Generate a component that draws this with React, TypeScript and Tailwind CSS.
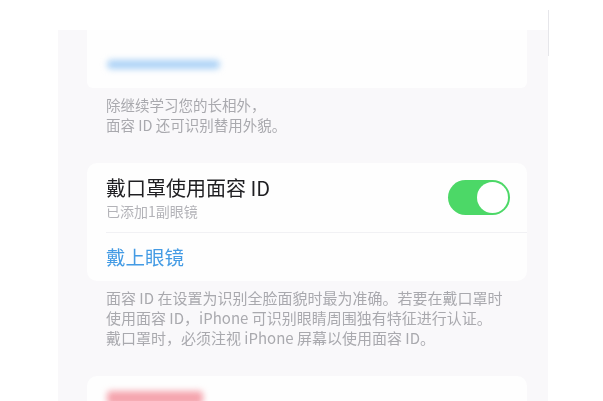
const font = { fontFamily: '"Noto Sans CJK SC", "Noto Sans", sans-serif' }

export default function App() {
  return (
    <div
      className="w-[603px] h-[401px] overflow-hidden bg-white flex"
      style={font}
    >
      {/* white margin left of the phone */}
      <div className="w-[58px] shrink-0" />

      {/* Phone screen */}
      <div className="w-[490px] shrink-0 mt-[30px] bg-[#f9f8fa] pl-[29px] pr-[21px] blur-[0.4px]">
        {/* Top card, cut off by the photo */}
        <div className="h-[58px] bg-[#fefefe] rounded-b-[6px] flex items-center pl-[20px]">
          <div className="w-[113px] h-[9px] mt-[10px] rounded-full bg-[#acd2f6] blur-[3px]" />
        </div>

        <div className="pl-[19px] pt-[7px] text-[14.5px] leading-[20px] text-[#a9a9ae]">
          <p>除继续学习您的长相外，</p>
          <p>面容 ID 还可识别替用外貌。</p>
        </div>

        {/* Mask card */}
        <div className="mt-[28px] bg-[#fefefe] rounded-[10px]">
          <div className="h-[69px] flex items-center pl-[19px] pr-[17px]">
            <div className="flex-1 pt-[2px]">
              <p className="text-[20px] leading-[24px] text-[#1f1f22]">戴口罩使用面容 ID</p>
              <p className="text-[14px] leading-[20px] text-[#b3b3b8] mt-[1px]">已添加1副眼镜</p>
            </div>
            <div className="w-[62px] h-[35px] rounded-full bg-[#4cd867] p-[2px] flex justify-end">
              <div className="w-[31px] h-[31px] rounded-full bg-white" />
            </div>
          </div>
          <div className="ml-[19px] h-px bg-[#f1f1f4]" />
          <div className="h-[48px] flex items-center pl-[19px]">
            <p className="text-[19.5px] text-[#449be4]">戴上眼镜</p>
          </div>
        </div>

        <div className="pl-[19px] pt-[7px] text-[15px] leading-[20px] text-[#a9a9ae]">
          <p>面容 ID 在设置为识别全脸面貌时最为准确。若要在戴口罩时</p>
          <p>使用面容 ID，iPhone 可识别眼睛周围独有特征进行认证。</p>
          <p>戴口罩时，必须注视 iPhone 屏幕以使用面容 ID。</p>
        </div>

        {/* Bottom card, cut off */}
        <div className="mt-[28px] h-[60px] bg-[#fefefe] rounded-t-[10px] pl-[20px] pt-[15px]">
          <div className="w-[96px] h-[14px] rounded-[4px] bg-[#f5a5ae] blur-[3px]" />
        </div>
      </div>

      {/* thin frame edge on the right */}
      <div className="w-px h-[46px] mt-[10px] bg-[#e6e6ea]" />
    </div>
  )
}
